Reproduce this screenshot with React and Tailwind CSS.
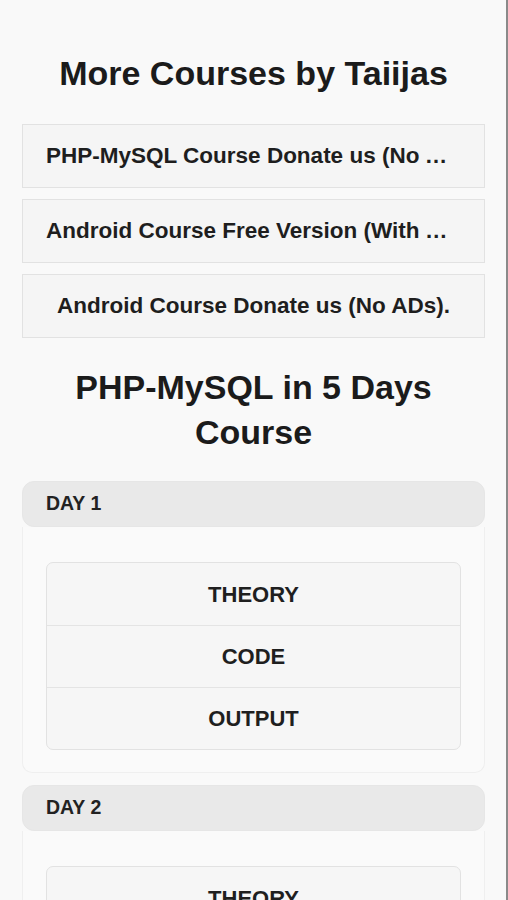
import React from "react";

const courses = [
  { label: "PHP-MySQL Course Donate us (No ADs).", center: false },
  { label: "Android Course Free Version (With ADs).", center: false },
  { label: "Android Course Donate us (No ADs).", center: true },
];

const days = ["DAY 1", "DAY 2"];

function DayBlock({ title }) {
  return (
    <div className="mt-[12px] first:mt-0">
      <div className="rounded-[12px] bg-[#e9e9e9] border border-[#e6e6e6] h-[46px] flex items-center px-[23px] text-[19.5px] font-bold text-[#222]">
        {title}
      </div>
      <div className="border-x border-b border-[#efefef] rounded-b-[10px] bg-[#fafafa] px-[23px] pt-[35px] pb-[22px]">
        <div className="rounded-[7px] border border-[#e2e2e2] bg-[#f6f6f6] overflow-hidden">
          {["THEORY", "CODE", "OUTPUT"].map((item, i) => (
            <div
              key={item}
              className={
                "h-[62px] flex items-center justify-center text-[22px] font-bold text-[#1f1f1f] " +
                (i > 0 ? "border-t border-[#e4e4e4]" : "")
              }
            >
              {item}
            </div>
          ))}
        </div>
      </div>
    </div>
  );
}

export default function App() {
  return (
    <div
      className="h-[900px] overflow-hidden bg-[#f9f9f9] border-r-2 border-[#8a8a8a] pl-[22px] pr-[21px] pt-[51px]"
      style={{ fontFamily: '"Liberation Sans", Arial, sans-serif' }}
    >
      <h1 className="text-center text-[34px] leading-[45px] font-bold text-[#1b1b1b]">
        More Courses by Taiijas
      </h1>

      <div className="mt-[28px] flex flex-col gap-[11px]">
        {courses.map((c) => (
          <div
            key={c.label}
            className={
              "border border-[#e2e2e2] bg-[#f5f5f5] h-[64px] flex items-center px-[23px] text-[22.5px] font-bold text-[#1e1e1e] " +
              (c.center ? "justify-center" : "")
            }
          >
            <span className="truncate">{c.label}</span>
          </div>
        ))}
      </div>

      <h2 className="mt-[27px] text-center text-[34px] leading-[45px] font-bold text-[#1b1b1b] px-[40px]">
        PHP-MySQL in 5 Days Course
      </h2>

      <div className="mt-[26px]">
        {days.map((d) => (
          <DayBlock key={d} title={d} />
        ))}
      </div>
    </div>
  );
}
